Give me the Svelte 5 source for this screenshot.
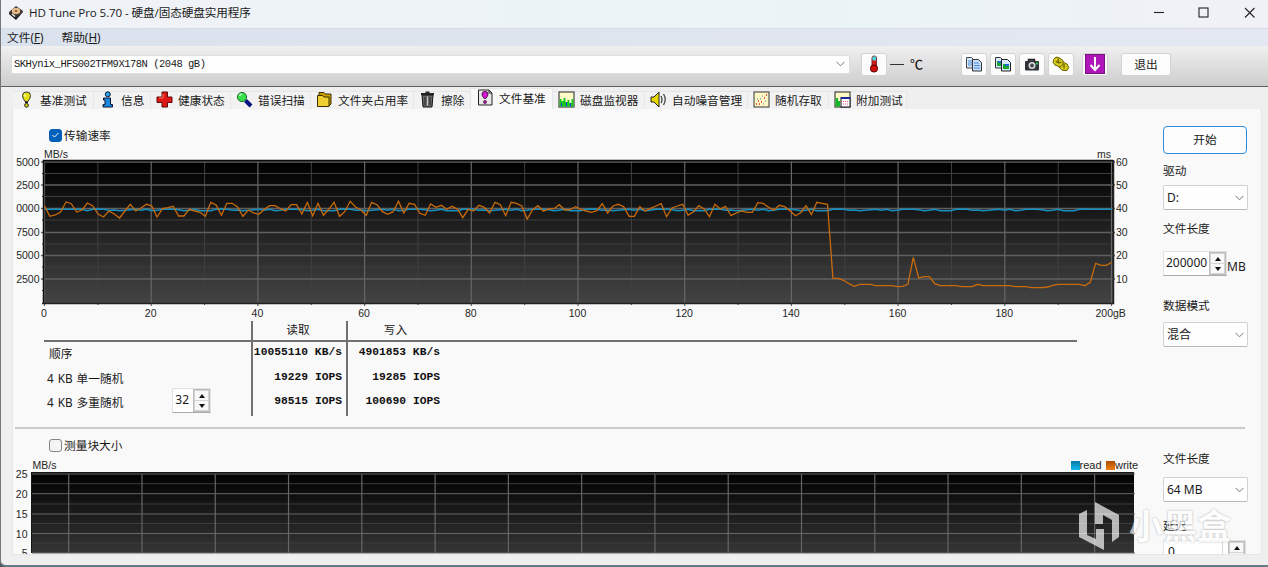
<script lang="ts">
	type Tab = { icon: string; label: string; width: number };

	const tabs: Tab[] = [
		{ icon: 'bulb', label: '基准测试', width: 81 },
		{ icon: 'info', label: '信息', width: 57 },
		{ icon: 'health', label: '健康状态', width: 80 },
		{ icon: 'search', label: '错误扫描', width: 80 },
		{ icon: 'folder', label: '文件夹占用率', width: 103 },
		{ icon: 'trash', label: '擦除', width: 57 },
		{ icon: 'file', label: '文件基准', width: 82 },
		{ icon: 'monitor', label: '磁盘监视器', width: 92 },
		{ icon: 'sound', label: '自动噪音管理', width: 103 },
		{ icon: 'random', label: '随机存取', width: 81 },
		{ icon: 'extra', label: '附加测试', width: 78 }
	];
	const activeTab = 'file';

	const results = [
		{ label: '顺序', read: '10055110 KB/s', write: '4901853 KB/s' },
		{ label: '4 KB 单一随机', read: '19229 IOPS', write: '19285 IOPS' },
		{ label: '4 KB 多重随机', read: '98515 IOPS', write: '100690 IOPS' }
	];

	// samples are depths below y = 190, three units to a pixel
	const writeSamples = [
		48, 79, 75, 66, 36, 41, 66, 60, 39, 48, 72, 81, 63, 72, 84, 63, 43, 63, 54, 43,
		48, 81, 56, 53, 49, 78, 78, 58, 63, 67, 79, 37, 45, 76, 40, 40, 51, 79, 60, 69,
		73, 58, 47, 47, 56, 63, 44, 44, 72, 37, 77, 40, 76, 58, 37, 79, 65, 34, 51, 60,
		76, 37, 44, 65, 73, 65, 34, 69, 40, 43, 70, 76, 42, 52, 46, 58, 49, 57, 83, 58,
		63, 46, 52, 69, 37, 44, 77, 37, 40, 48, 87, 60, 47, 64, 57, 56, 44, 60, 59, 50,
		58, 63, 67, 62, 41, 69, 48, 43, 50, 79, 79, 50, 63, 55, 48, 41, 80, 54, 48, 43,
		75, 66, 47, 57, 80, 43, 57, 49, 77, 69, 63, 67, 67, 38, 40, 52, 61, 46, 50, 62,
		77, 68, 47, 74, 37, 40, 43, 265, 265, 271, 281, 289, 283, 283, 283, 287, 287, 287, 287, 290,
		289, 283, 202, 264, 260, 260, 281, 287, 287, 287, 287, 290, 290, 290, 283, 287, 287, 287, 287, 287,
		287, 290, 290, 290, 293, 293, 293, 291, 286, 283, 283, 283, 283, 283, 287, 276, 220, 226, 226, 217
	];
	const readPattern = [58, 58, 59, 62, 61, 58, 62, 62, 62, 58, 57, 58, 61, 60, 62, 61, 59, 58, 61, 58, 62, 61, 58];
	const readSamples = writeSamples.map((_, i) => (i < 8 || i > 195 ? 58 : readPattern[i % 23]));

	const toPoints = (samples: number[]): string =>
		samples.map((value, i) => `${(44.5 + i * 5.363).toFixed(1)},${(190 + value / 3).toFixed(1)}`).join(' ');

	const rows = [162, 185, 208.5, 232.5, 255.5, 279];
	const minorRows = [173.5, 196.5, 220, 244, 267, 290.5];
	const speedLabels = ['5000', '2500', '0000', '7500', '5000', '2500'];
	const columns = Array.from({ length: 11 }, (_, i) => 44.5 + i * 106.7);
	const blockColumns = Array.from({ length: 15 }, (_, i) => 68.7 + i * 73.28);
	const blockRows = [474, 493.7, 514, 533.5, 553];
</script>

{#snippet chevron()}
	<svg class="chevron" width="9" height="6" viewBox="0 0 9 6"><path d="M.5.8 4.5 4.8 8.5.8" fill="none" stroke="#777" /></svg>
{/snippet}

{#snippet stepper()}
	<span class="stepper">
		<span><svg width="6" height="4"><path d="M0 4h6L3 0z" fill="#111" /></svg></span>
		<span><svg width="6" height="4"><path d="M0 0h6L3 4z" fill="#111" /></svg></span>
	</span>
{/snippet}

{#snippet tabIcon(name: string)}
	<svg class="tab-icon" width="17" height="17" viewBox="0 0 17 17">
		{#if name === 'bulb'}
			<path d="M4.500 4.500Q4.500 1 8.500 1T12.500 4.500Q12.500 7 10 10.500H7Q4.500 7 4.500 4.500z" fill="#e8e010" stroke="#333" />
			<path d="M7 3v3" stroke="#fff" />
			<path d="M7 11h3v1h-3z" fill="#222" />
			<circle cx="8.500" cy="14.300" r="1.900" fill="#d8ce00" stroke="#222" />
		{:else if name === 'info'}
			<circle cx="8.800" cy="3.300" r="2.500" fill="#20a8f0" stroke="#113" />
			<path d="M4.500 7h7v6.500h2V16H4v-2.500h2V9H4.500z" fill="#168be0" stroke="#113" />
		{:else if name === 'health'}
			<path d="M6 1h5.500v5H16v5.500h-4.500V16H6v-4.500H1V6h5z" fill="#df1717" stroke="#5b0a0a" />
			<path d="M7 3v4H3" fill="none" stroke="#ff7a66" />
		{:else if name === 'search'}
			<path d="m9.500 9.500 5.500 5.500" stroke="#00107c" stroke-width="4" />
			<circle cx="6" cy="6" r="4.600" fill="#39e04c" stroke="#176a2a" />
			<path d="M3.500 5Q4 3 6 3" stroke="#c9ffd0" fill="none" stroke-width="1.500" />
		{:else if name === 'folder'}
			<path d="M3 4V1.500h5L9.500 3H15v10l-2 2" fill="#c79c00" stroke="#3b3000" />
			<path d="M1.500 4.500h5L8 6h5v9.500H1.500z" fill="#f0cf32" stroke="#3b3000" />
		{:else if name === 'trash'}
			<path d="M3 4h11l-1 12H4z" fill="#686868" stroke="#111" />
			<path d="M2 3h13M6.500 1.500h4" stroke="#222" stroke-width="2" />
			<path d="M6 6v8M11 6v8" stroke="#222" />
			<path d="M8.500 5.500v9" stroke="#ccc" />
		{:else if name === 'file'}
			<path d="M1.500 1h10.500l3 3v12H1.500z" fill="#e8e8e8" stroke="#222" />
			<path d="M12 1v3h3" fill="none" stroke="#222" />
			<path d="M5 5Q5 2.500 8 2.500T11 5Q11 7 8.800 9.500H7.200Q5 7 5 5z" fill="#d818d8" stroke="#501050" />
			<circle cx="8" cy="13" r="1.500" fill="#c010c0" stroke="#301030" stroke-width=".7" />
		{:else if name === 'monitor'}
			<rect x="1" y="1" width="15" height="15" fill="#fffcc8" stroke="#222" />
			<path d="M1.500 15.500V8h2v2h2V7h2v4h2V9h2v3h2V8h2v7.500z" fill="#14c81e" />
			<path d="M3 15.500V12h1v3.500M8 15.500V11h1v4.500M12 15.500V12h1v3.500" fill="#2038e0" />
		{:else if name === 'sound'}
			<path d="M1 6h3l5-5v15l-5-5H1z" fill="#e6d800" stroke="#222" />
			<path d="M11 5q2 3.500 0 7M13.500 3q3.500 5.500 0 11" fill="none" stroke="#444" stroke-width="1.300" />
		{:else if name === 'random'}
			<rect x="1" y="1" width="15" height="15" fill="#fff8c4" stroke="#333" />
			<path d="M3 13h1M5 10h1M8 11h1M11 7h1M13 4h1M6 13h1" stroke="#e02020" stroke-width="1.300" />
			<path d="M4 8h1M7 8h1M9 5h1M12 10h1M10 13h1" stroke="#6070d8" stroke-width="1.200" />
		{:else}
			<rect x="1" y="1" width="15" height="15" fill="#fff8c4" stroke="#222" />
			<path d="M1.500 15.500V7H4v3h2v5.500z" fill="#10b82a" />
			<rect x="7" y="6.500" width="9" height="9.500" fill="#fff" stroke="#112" />
			<path d="M7 7h9" stroke="#1826a0" stroke-width="2" />
			<path d="M9 10.500h6M9 13h6" stroke="#e05080" stroke-dasharray="1 1" />
		{/if}
	</svg>
{/snippet}

<div class="window">
	<header class="title-bar">
		<svg class="app-icon" width="16" height="16" viewBox="0 0 16 16">
			<path d="M1 7 8 1l7 5-7 8z" fill="#3a3532" />
			<path d="M1 7v2l7 6 7-8V6l-7 7z" fill="#191919" />
			<ellipse cx="8" cy="6" rx="4.200" ry="3.200" fill="#e2b98a" />
			<circle cx="8" cy="6" r="1" fill="#7b4a22" />
			<path d="m4 9 3 2.500" stroke="#eee" stroke-width="1.500" />
		</svg>
		<span class="title">HD Tune Pro 5.70 - 硬盘/固态硬盘实用程序</span>
		<svg class="window-controls" width="110" height="14" viewBox="0 0 110 14" fill="none" stroke="#222" stroke-width="1.100">
			<path d="M4 6.500h10" />
			<rect x="49" y="2" width="9" height="9" />
			<path d="m95 2 9.500 9.500M104.500 2 95 11.500" />
		</svg>
	</header>

	<nav class="menu-bar">
		<span>文件(<u>F</u>)</span>
		<span>帮助(<u>H</u>)</span>
	</nav>

	<div class="toolbar">
		<div class="drive-select">SKHynix_HFS002TFM9X178N (2048 gB){@render chevron()}</div>
		<span class="tool temp">
			<svg width="12" height="18" viewBox="0 0 12 18">
				<rect x="4" y="1" width="4.500" height="12" rx="2" fill="#d81818" stroke="#633" />
				<rect x="4.500" y="1.500" width="3.500" height="4" fill="#50d8e0" />
				<circle cx="6" cy="13.500" r="3.600" fill="#d01010" stroke="#500" />
			</svg>
		</span>
		<span class="degrees"><i></i>℃</span>
		<span class="tool copy">
			<svg width="18" height="18" viewBox="0 0 18 18">
				<path d="M1.500 2.500h5l2 2V13h-7z" fill="#d8eafc" stroke="#444" />
				<path d="M7.500 4.500h6l3 3V16h-9z" fill="#c6defa" stroke="#333" />
				<path d="M3 6h4M3 8h4M3 10h4M9 8h5M9 10.500h6M9 13h6" stroke="#4888d8" />
			</svg>
		</span>
		<span class="tool">
			<svg width="18" height="18" viewBox="0 0 18 18">
				<path d="M1.500 2.500h5l2 2V13h-7z" fill="#d8eafc" stroke="#333" />
				<path d="M7.500 4.500h6l3 3V16h-9z" fill="#d8eafc" stroke="#222" />
				<path d="M3 6h4v5H3zM9 9h6v5H9z" fill="#18a830" />
				<path d="M4 6h3v2H4zM11 9h4v2h-4z" fill="#2268d8" />
			</svg>
		</span>
		<span class="tool">
			<svg width="18" height="18" viewBox="0 0 18 18">
				<path d="M5.500 7V4.500h6V7" fill="#555" stroke="#222" stroke-width="1.500" />
				<rect x="2" y="6" width="14" height="9.500" rx="1" fill="#303338" />
				<circle cx="9" cy="10.500" r="3.500" fill="#dcdcdc" />
				<circle cx="9" cy="10.500" r="1.900" fill="#454b50" />
				<path d="M13 7.500h2v2h-2z" fill="#28c850" />
			</svg>
		</span>
		<span class="tool">
			<svg width="18" height="18" viewBox="0 0 18 18" fill="#d4c818" stroke="#6b6300">
				<path d="m8 8 3-1 4 2 1.800 3.500-2 3.200-4.800-.5-3-3z" />
				<path d="M1.500 4.500 4 2l3.500 1L11 5.500v4L8 12l-5-2-1.800-2.500z" />
				<path d="M6.300 3.500V8M12 9v4.500M4 6q2 3 5 1" fill="none" stroke-width="1.300" />
			</svg>
		</span>
		<span class="tool save">
			<svg width="20" height="20" viewBox="0 0 20 20">
				<rect x=".5" y=".5" width="19" height="19" fill="#ae16b9" stroke="#75147d" />
				<path d="M10 3v12M5.500 11l4.500 5 4.500-5" fill="none" stroke="#fff" stroke-width="2" />
			</svg>
		</span>
		<span class="tool exit">退出</span>
	</div>

	<div class="tabs">
		{#each tabs as tab}
			<div class="tab" class:active={tab.icon === activeTab} style="width: {tab.width}px">
				{@render tabIcon(tab.icon)}
				<span>{tab.label}</span>
			</div>
		{/each}
	</div>

	<main class="page">
		<section class="transfer">
			<div class="charts">
				<div class="check-row">
					<span class="checkbox checked">
						<svg width="9" height="8" viewBox="0 0 9 8"><path d="m1.500 4 2 2 4-4" fill="none" stroke="#fff" /></svg>
					</span>
					传输速率
				</div>

				<svg class="chart" width="1135" height="173" viewBox="13 147 1135 173">
					<defs>
						<linearGradient id="plot" x1="0" y1="0" x2="0" y2="1">
							<stop offset="0" stop-color="#000" />
							<stop offset="1" stop-color="#444" />
						</linearGradient>
					</defs>
					<rect x="43" y="160" width="1070" height="144" fill="url(#plot)" />
					{#each minorRows as y}
						<path d="M42 {y}H1113" stroke="#3d3d3d" />
					{/each}
					{#each columns.slice(0, 10) as x}
						<path d="M{x + 53.4} 161V305" stroke="#404040" />
					{/each}
					{#each rows as y}
						<path d="M41 {y}H1115" stroke="#606060" stroke-width="1.400" />
					{/each}
					{#each columns as x}
						<path d="M{x} 161V306" stroke="#666" stroke-width="1.200" />
					{/each}
					<path d="M43.500 303V160.500H1113" fill="none" stroke="#0b0b0b" stroke-width="1.500" />
					<path d="M42 303.500H1113.500V160" fill="none" stroke="#222" stroke-width="1.500" />
					<polyline points={toPoints(readSamples)} fill="none" stroke="#1690bf" stroke-width="1.500" />
					<polyline points={toPoints(writeSamples)} fill="none" stroke="#c96a0b" stroke-width="1.300" />
					<text x="44" y="158">MB/s</text>
					<text x="1111" y="158" text-anchor="end">ms</text>
					{#each rows as y, i}
						<text x="39.500" y={y + 3.5} text-anchor="end">{speedLabels[i]}</text>
						<text x="1116" y={y + 3.5}>{60 - i * 10}</text>
					{/each}
					{#each columns.slice(0, 10) as x, i}
						<text x={x - 0.5} y="317" text-anchor="middle">{i * 20}</text>
					{/each}
					<text x="1095.500" y="317">200gB</text>
				</svg>

				<div class="results">
					<div class="result-head">
						<span></span>
						<span class="read">读取</span>
						<span class="write">写入</span>
					</div>
					{#each results as row, i}
						<div class="result-row">
							<span class="label" class:first={i === 0}>{row.label}
								{#if i === 2}
									<span class="number queue"><span>32</span>{@render stepper()}</span>
								{/if}
							</span>
							<span class="value read">{row.read}</span>
							<span class="value write">{row.write}</span>
						</div>
					{/each}
				</div>
			</div>

			<aside class="controls">
				<div class="start">开始</div>
				<div class="caption drive">驱动</div>
				<div class="select">D:{@render chevron()}</div>
				<div class="caption length">文件长度</div>
				<div class="length-row"><span class="number"><span>200000</span>{@render stepper()}</span><span class="unit">MB</span></div>
				<div class="caption mode">数据模式</div>
				<div class="select">混合{@render chevron()}</div>
			</aside>
		</section>

		<section class="blocks">
			<div class="charts">
				<div class="check-row">
					<span class="checkbox"></span>
					测量块大小
				</div>
				<svg class="chart" width="1135" height="96" viewBox="13 458 1135 96">
					<defs>
						<linearGradient id="block-plot" gradientUnits="userSpaceOnUse" x1="0" y1="472" x2="0" y2="575">
							<stop offset="0" stop-color="#000" />
							<stop offset="1" stop-color="#444" />
						</linearGradient>
						<linearGradient id="read-key" x1="0" y1="0" x2="0" y2="1">
							<stop offset="0" stop-color="#0878a8" />
							<stop offset="1" stop-color="#12b8ee" />
						</linearGradient>
						<linearGradient id="write-key" x1="0" y1="0" x2="0" y2="1">
							<stop offset="0" stop-color="#a84c00" />
							<stop offset="1" stop-color="#f08010" />
						</linearGradient>
					</defs>
					<rect x="31" y="472" width="1103" height="81" fill="url(#block-plot)" />
					{#each blockRows as y}
						<path d="M32 {y}H1135" stroke="#666" />
						<path d="M32 {y - 10}H1134" stroke={y > 480 ? '#3c3c3c' : 'none'} />
					{/each}
					{#each blockColumns as x}
						<path d="M{x} 474V553" stroke="#666" stroke-width="1.200" />
					{/each}
					<path d="M31.500 553V472.500H1134" fill="none" stroke="#101814" />
					<rect x="1071" y="461" width="9" height="9" fill="url(#read-key)" />
					<text class="key" x="1079.500" y="469">read</text>
					<rect x="1106" y="461" width="9" height="9" fill="url(#write-key)" />
					<text class="key" x="1115" y="469">write</text>
					<text x="32.500" y="469">MB/s</text>
					{#each blockRows as y, i}
						<text x="27.500" y={y + 4} text-anchor="end">{25 - i * 5}</text>
					{/each}
				</svg>
			</div>

			<aside class="controls">
				<div class="caption block-length">文件长度</div>
				<div class="select block-select">64 MB{@render chevron()}</div>
				<div class="caption delay">延迟</div>
				<span class="number delay-input"><span>0</span>{@render stepper()}</span>
			</aside>
		</section>
	</main>

	<div class="watermark">
		<svg width="41" height="48" viewBox="0 0 41 48" fill="#fff">
			<path d="M0 12 8 8v25l9 4V27h8v21L0 35z" />
			<path d="M16 0 40 13v22l-7 5V18l-9-5v9h-8z" />
		</svg>
		<span>小黑盒</span>
	</div>
</div>

<style>
	:global(body) {
		overflow: hidden;
		background: #555;
	}

	.window {
		position: relative;
		box-sizing: border-box;
		width: 1268px;
		height: 567px;
		overflow: hidden;
		border-left: 1px solid #777;
		border-bottom: 2px solid #657987;
		border-bottom-left-radius: 6px;
		background: #efefef;
		color: #1a1a1a;
		font-family: 'Noto Sans', 'Noto Sans CJK SC', sans-serif;
		font-size: 11.7px;
		line-height: 16px;
		white-space: nowrap;
	}

	.title-bar {
		box-sizing: border-box;
		display: flex;
		align-items: center;
		height: 29px;
		padding: 0 8px 3px 7px;
		border-bottom: 1px solid #d8dce0;
		background: linear-gradient(90deg, #f0f2f7, #eaf4f6 65%, #f0f1f6);
	}

	.title {
		margin-left: 5px;
		font-family: 'Open Sans', 'Noto Sans CJK SC', sans-serif;
		font-size: 11.6px;
		letter-spacing: -0.1px;
	}

	.window-controls {
		margin-left: auto;
	}

	.menu-bar {
		display: flex;
		gap: 18px;
		height: 17px;
		padding-left: 6px;
		background: linear-gradient(90deg, #dae2ed, #e4e8f2);
	}

	.toolbar {
		box-sizing: border-box;
		display: flex;
		align-items: center;
		height: 41px;
		padding: 0 0 4px 10px;
		border-bottom: 1px solid #606060;
		background: linear-gradient(#f0f0f0, #cdcdcd);
	}

	.drive-select {
		box-sizing: border-box;
		display: flex;
		align-items: center;
		width: 839px;
		height: 19px;
		padding: 0 4px 0 2px;
		border: 1px solid #ddd;
		border-radius: 2px;
		background: #fefefe;
		font-family: 'Liberation Mono', monospace;
		font-size: 10.5px;
		letter-spacing: -0.5px;
	}

	.chevron {
		flex: none;
		margin-left: auto;
	}

	.tool {
		box-sizing: border-box;
		display: flex;
		flex: none;
		align-items: center;
		justify-content: center;
		width: 26px;
		height: 23px;
		margin-right: 3px;
		border: 1px solid #d4d4d4;
		border-radius: 3px;
		background: #fcfcfc;
	}

	.temp {
		margin: 0 3px 0 11px;
	}

	.degrees {
		display: flex;
		align-items: center;
		gap: 6px;
		width: 71px;
		font-family: 'Noto Sans CJK SC', sans-serif;
		font-size: 13px;
		font-weight: 500;
	}

	.degrees i {
		width: 14px;
		height: 1px;
		background: #333;
	}

	.save {
		margin-left: 5px;
	}

	.exit {
		width: 50px;
		margin-left: 10px;
	}

	.tabs {
		display: flex;
		align-items: flex-end;
		height: 22px;
		padding-left: 12px;
	}

	.tab {
		box-sizing: border-box;
		display: flex;
		flex: none;
		align-items: center;
		height: 18px;
		padding: 0 0 2px 5px;
		border: 1px solid #e6e6e6;
		border-bottom: 0;
		border-left: 0;
		background: #f2f2f2;
	}

	.tab.active {
		height: 21px;
		padding: 0 0 3px 6px;
		background: #f9f9f9;
	}

	.tab-icon {
		flex: none;
		margin-right: 5px;
	}

	.page {
		box-sizing: border-box;
		width: 1250px;
		height: 446px;
		margin-left: 11px;
		overflow: hidden;
		border: 1px solid #e6e6e6;
		border-top: 0;
		background: #f9f9f9;
	}

	.transfer,
	.blocks {
		display: flex;
	}

	.transfer {
		box-sizing: border-box;
		width: 1230px;
		height: 320px;
		margin-left: 2px;
		border-bottom: 2px solid #cbcbcb;
	}

	.transfer .charts {
		margin-left: -2px;
	}

	.charts {
		width: 1150px;
		flex: none;
	}

	.check-row {
		display: flex;
		align-items: center;
		gap: 2px;
		height: 16px;
		padding: 18px 0 4px 36px;
	}

	.checkbox {
		box-sizing: border-box;
		display: grid;
		place-items: center;
		width: 13px;
		height: 13px;
		border: 1px solid #858585;
		border-radius: 3px;
		background: #f4f4f4;
	}

	.checked {
		border-color: #005fb8;
		background: #005fb8;
	}

	.chart {
		display: block;
	}

	.chart text {
		fill: #262626;
		font-family: 'Liberation Sans', Arial, sans-serif;
		font-size: 10.5px;
	}

	.chart .key {
		font-size: 11px;
	}

	.results {
		width: 1033px;
		margin: 1px 0 0 31px;
	}

	.result-head,
	.result-row {
		display: grid;
		grid-template-columns: 207px 95px 731px;
	}

	.result-head {
		height: 19px;
		border-bottom: 2px solid #707070;
		text-align: center;
	}

	.result-row {
		height: 24.7px;
	}

	.result-head span,
	.result-row > span {
		box-sizing: border-box;
	}

	.read,
	.write {
		border-left: 2px solid #707070;
	}

	/* the column rules run through the header line */
	.result-head .read,
	.result-head .write {
		height: 21px;
	}

	.result-head .read {
		padding-right: 3px;
	}

	.result-head .write {
		padding-right: 634px;
	}

	.label {
		display: flex;
		align-items: center;
		height: 24px;
		padding: 0 0 2px 3px;
		word-spacing: 1px;
	}

	.label.first {
		padding-left: 5px;
	}

	.value {
		color: #111;
		font-family: 'Liberation Mono', monospace;
		font-size: 11.3px;
		font-weight: 700;
		line-height: 21px;
	}

	.value.read {
		padding-right: 4px;
		text-align: right;
	}

	.value.write {
		padding-right: 637px;
		text-align: right;
	}

	.number {
		box-sizing: border-box;
		display: flex;
		width: 64px;
		height: 25px;
		border: 1px solid #e2e2e2;
		border-bottom-color: #aaa;
		background: #fff;
		font-size: 12px;
		line-height: 22px;
	}

	.number > span:first-child {
		flex: 1;
		padding-left: 2px;
	}

	.queue {
		width: 39px;
		margin: -3px 0 0 49px;
	}

	.stepper {
		box-sizing: border-box;
		display: flex;
		flex: none;
		flex-direction: column;
		width: 17px;
		gap: 1px;
		padding: 1px;
		border: 1px solid #bcbcbc;
		background: #d4d4d4;
	}

	.stepper span {
		display: grid;
		flex: 1;
		place-items: center;
		background: #f8f8f8;
		line-height: 0;
	}

	.controls {
		width: 86px;
		flex: none;
	}

	.start {
		box-sizing: border-box;
		width: 84px;
		height: 28px;
		margin-top: 17px;
		border: 1px solid #2f8ddb;
		border-radius: 4px;
		background: #fdfdfd;
		line-height: 25px;
		text-align: center;
	}

	.caption {
		height: 16px;
	}

	.drive {
		margin: 8px 0 7px;
	}

	.select {
		box-sizing: border-box;
		display: flex;
		align-items: center;
		width: 85px;
		height: 25px;
		padding: 0 3px;
		border: 1px solid #d2d2d2;
		border-bottom-color: #b8b8b8;
		border-radius: 2px;
		background: #fefefe;
		font-size: 12px;
	}

	.length {
		margin: 10px 0 15px;
	}

	.length-row {
		display: flex;
	}

	.unit {
		margin: 8px 0 0;
		font-size: 12px;
	}

	.mode {
		margin: 21px 0 9px;
	}

	.blocks .check-row {
		padding: 8px 0 5px 36px;
	}

	.block-length {
		margin-top: 21px;
	}

	.block-select {
		margin-top: 11px;
	}

	.delay {
		margin-top: 15px;
	}

	.delay-input {
		width: 83px;
		margin-top: 7px;
	}

	.delay-input > span:first-child {
		margin-right: 5px;
		padding-left: 4px;
		border-right: 1px solid #d8d8d8;
	}

	.watermark {
		position: absolute;
		top: 502px;
		left: 1078px;
		display: flex;
		align-items: center;
		gap: 9px;
		opacity: 0.68;
		color: #fff;
		font-size: 34px;
		font-weight: 700;
		line-height: 48px;
		text-shadow: 0 0 2px #888;
	}
</style>
